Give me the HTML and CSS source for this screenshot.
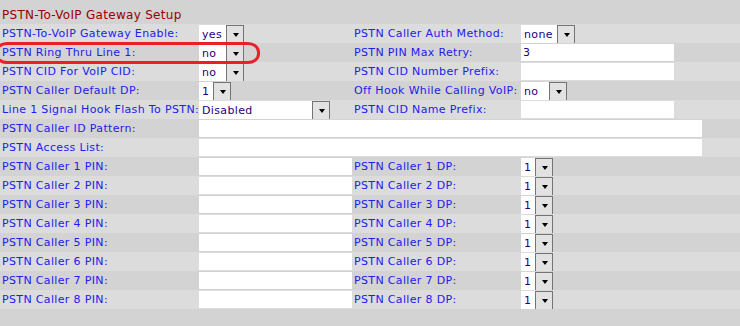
FILE: index.html
```html
<!DOCTYPE html>
<html lang="en">
    <head>
        <meta charset="UTF-8" />
        <title>PSTN-To-VoIP Gateway Setup</title>
        <link rel="stylesheet" href="styles.css">
    </head>
    <body>
        <h1 class="title">PSTN-To-VoIP Gateway Setup</h1>
        <table class="cfg">
            <colgroup>
                <col class="c-lab1" />
                <col class="c-val1" />
                <col class="c-lab2" />
                <col />
            </colgroup>
            <tr>
                <td>PSTN-To-VoIP Gateway Enable:</td>
                <td><span class="sel sel-m"><select><option>yes</option><option>no</option></select></span></td>
                <td>PSTN Caller Auth Method:</td>
                <td><span class="sel sel-n"><select><option>none</option></select></span></td>
            </tr>
            <tr>
                <td>PSTN Ring Thru Line 1:</td>
                <td><span class="sel sel-m"><select><option>no</option><option>yes</option></select></span></td>
                <td>PSTN PIN Max Retry:</td>
                <td><input class="txt" type="text" value="3" /></td>
            </tr>
            <tr>
                <td>PSTN CID For VoIP CID:</td>
                <td><span class="sel sel-m"><select><option>no</option><option>yes</option></select></span></td>
                <td>PSTN CID Number Prefix:</td>
                <td><input class="txt" type="text" value="" /></td>
            </tr>
            <tr>
                <td>PSTN Caller Default DP:</td>
                <td><span class="sel sel-s"><select><option>1</option></select></span></td>
                <td>Off Hook While Calling VoIP:</td>
                <td><span class="sel sel-o"><select><option>no</option><option>yes</option></select></span></td>
            </tr>
            <tr>
                <td>Line 1 Signal Hook Flash To PSTN:</td>
                <td><span class="sel sel-l"><select><option>Disabled</option></select></span></td>
                <td>PSTN CID Name Prefix:</td>
                <td><input class="txt" type="text" value="" /></td>
            </tr>
            <tr>
                <td>PSTN Caller ID Pattern:</td>
                <td colspan="3"><input class="txt txt-long" type="text" value="" /></td>
            </tr>
            <tr>
                <td>PSTN Access List:</td>
                <td colspan="3"><input class="txt txt-long" type="text" value="" /></td>
            </tr>
            <tr>
                <td>PSTN Caller 1 PIN:</td>
                <td><input class="txt" type="text" value="" /></td>
                <td>PSTN Caller 1 DP:</td>
                <td><span class="sel sel-s"><select><option>1</option></select></span></td>
            </tr>
            <tr>
                <td>PSTN Caller 2 PIN:</td>
                <td><input class="txt" type="text" value="" /></td>
                <td>PSTN Caller 2 DP:</td>
                <td><span class="sel sel-s"><select><option>1</option></select></span></td>
            </tr>
            <tr>
                <td>PSTN Caller 3 PIN:</td>
                <td><input class="txt" type="text" value="" /></td>
                <td>PSTN Caller 3 DP:</td>
                <td><span class="sel sel-s"><select><option>1</option></select></span></td>
            </tr>
            <tr>
                <td>PSTN Caller 4 PIN:</td>
                <td><input class="txt" type="text" value="" /></td>
                <td>PSTN Caller 4 DP:</td>
                <td><span class="sel sel-s"><select><option>1</option></select></span></td>
            </tr>
            <tr>
                <td>PSTN Caller 5 PIN:</td>
                <td><input class="txt" type="text" value="" /></td>
                <td>PSTN Caller 5 DP:</td>
                <td><span class="sel sel-s"><select><option>1</option></select></span></td>
            </tr>
            <tr>
                <td>PSTN Caller 6 PIN:</td>
                <td><input class="txt" type="text" value="" /></td>
                <td>PSTN Caller 6 DP:</td>
                <td><span class="sel sel-s"><select><option>1</option></select></span></td>
            </tr>
            <tr>
                <td>PSTN Caller 7 PIN:</td>
                <td><input class="txt" type="text" value="" /></td>
                <td>PSTN Caller 7 DP:</td>
                <td><span class="sel sel-s"><select><option>1</option></select></span></td>
            </tr>
            <tr>
                <td>PSTN Caller 8 PIN:</td>
                <td><input class="txt" type="text" value="" /></td>
                <td>PSTN Caller 8 DP:</td>
                <td><span class="sel sel-s"><select><option>1</option></select></span></td>
            </tr>
        </table>
        <!-- red mark round the ring thru row -->
        <div class="mark"></div>
    </body>
</html>
```

FILE: styles.css
```css
* {
    margin: 0;
    padding: 0;
    box-sizing: border-box;
}
body {
    background: #d3d3d3;
    font-family: "DejaVu Sans", Verdana, sans-serif;
    font-size: 11px;
    letter-spacing: 0.35px;
    position: relative;
    overflow: hidden;
}
.title {
    height: 24px;
    padding: 6px 0 0 2px;
    line-height: 18px;
    font-size: 12px;
    font-weight: normal;
    letter-spacing: 0.3px;
    color: #990000;
}

.cfg {
    width: 100%;
    table-layout: fixed;
    border-collapse: collapse;
    tr {
        height: 19px;
    }
    tr:nth-child(odd) {
        background: #dcdcdc;
    }
    tr:nth-child(even) {
        background: #d3d3d3;
    }
    td {
        padding: 0;
        vertical-align: top;
        white-space: nowrap;
        overflow: hidden;
    }
    td:nth-child(odd) {
        vertical-align: middle;
        padding-left: 2px;
        color: #2020ee;
    }
}
.c-lab1 {
    width: 199px;
}
.c-val1 {
    width: 153px;
}
.c-lab2 {
    width: 169px;
}

.txt {
    display: block;
    margin-top: 1px;
    width: 153px;
    height: 17px;
    border: 0;
    padding: 0 2px;
    background: #fff;
    font: 11px "DejaVu Sans", Verdana, sans-serif;
    letter-spacing: 0.35px;
    color: #200080;
    outline: none;
}
.txt-long {
    width: 503px;
}

.sel {
    position: relative;
    display: block;
    margin-top: 1px;
    height: 18px;
    select {
        appearance: none;
        display: block;
        width: 100%;
        height: 18px;
        border: 0;
        border-radius: 0;
        padding: 0 16px 0 3px;
        background: #fff;
        font: 11px "DejaVu Sans", Verdana, sans-serif;
        letter-spacing: 0.35px;
        color: #200080;
        outline: none;
    }
}
/* arrow button */
.sel::after {
    content: "";
    position: absolute;
    right: 0;
    top: 0;
    width: 16px;
    height: 18px;
    border: 1px solid #747474;
    background: #e2e2e2;
    pointer-events: none;
}
.sel::before {
    content: "";
    position: absolute;
    right: 5px;
    top: 8px;
    z-index: 1;
    border-top: 4px solid #000;
    border-left: 3px solid transparent;
    border-right: 3px solid transparent;
    pointer-events: none;
}
.sel-s {
    width: 32px;
}
.sel-m {
    width: 45px;
}
.sel-o {
    width: 46px;
}
.sel-n {
    width: 54px;
}
.sel-l {
    width: 131px;
}

.mark {
    position: absolute;
    left: -5px;
    top: 42px;
    width: 265px;
    height: 22px;
    border: 3px solid #e8202a;
    border-radius: 12px / 10px;
    pointer-events: none;
}
```
